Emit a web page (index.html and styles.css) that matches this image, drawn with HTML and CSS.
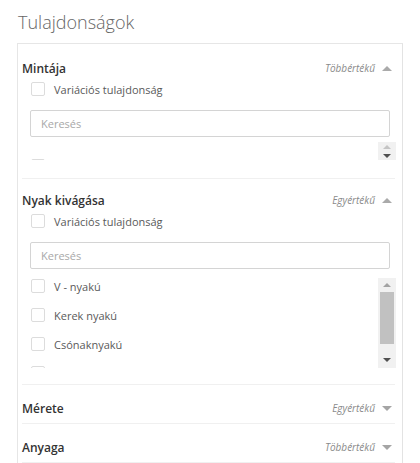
FILE: index.html
```html
<!DOCTYPE html>
<html lang="hu">
<head>
  <meta charset="UTF-8" />
  <title>Tulajdonságok</title>
  <link rel="stylesheet" href="styles.css">
</head>
<body>
  <h2 class="title">Tulajdonságok</h2>

  <div class="panel">
    <div class="prop">
      <div class="prop-head">
        <span class="prop-name">Mintája</span>
        <span class="prop-type">Többértékű</span>
        <span class="caret up"></span>
      </div>
      <label class="check-row"><span class="box"></span>Variációs tulajdonság</label>
      <input class="search" type="text" placeholder="Keresés">
      <div class="scroll-area small">
        <div class="list">
          <div class="check-row"><span class="box"></span></div>
        </div>
        <div class="scrollbar">
          <div class="sb-btn"><span class="sb-arrow up off"></span></div>
          <div class="sb-btn"><span class="sb-arrow down"></span></div>
        </div>
      </div>
    </div>

    <div class="prop">
      <div class="prop-head">
        <span class="prop-name">Nyak kivágása</span>
        <span class="prop-type">Egyértékű</span>
        <span class="caret up"></span>
      </div>
      <label class="check-row"><span class="box"></span>Variációs tulajdonság</label>
      <input class="search" type="text" placeholder="Keresés">
      <div class="scroll-area tall">
        <div class="list">
          <div class="check-row"><span class="box"></span>V - nyakú</div>
          <div class="check-row"><span class="box"></span>Kerek nyakú</div>
          <div class="check-row"><span class="box"></span>Csónaknyakú</div>
          <div class="check-row"><span class="box"></span></div>
        </div>
        <div class="scrollbar">
          <div class="sb-btn top"><span class="sb-arrow up"></span></div>
          <div class="sb-track"><div class="sb-thumb"></div></div>
          <div class="sb-btn bottom"><span class="sb-arrow down"></span></div>
        </div>
      </div>
    </div>

    <div class="prop closed">
      <div class="prop-head">
        <span class="prop-name">Mérete</span>
        <span class="prop-type">Egyértékű</span>
        <span class="caret down"></span>
      </div>
    </div>

    <div class="prop closed">
      <div class="prop-head">
        <span class="prop-name">Anyaga</span>
        <span class="prop-type">Többértékű</span>
        <span class="caret down"></span>
      </div>
    </div>
  </div>
</body>
</html>
```

FILE: styles.css
```css
body {
  margin: 0;
  padding: 0 0 0 17px;
  font-family: 'Open Sans', 'Noto Sans', sans-serif;
  background: #fff;
  color: #555;
}
.title {
  margin: 0;
  padding: 10px 0 0 1px;
  height: 43px;
  box-sizing: border-box;
  font-size: 18px;
  line-height: 24px;
  font-weight: 300;
  color: #666;
}
.panel {
  width: 386px;
  height: 440px;
  box-sizing: border-box;
  border: 1px solid #e6e6e6;
  border-right-color: #e3e3e3;
  padding: 3px 7px 0 4px;
}
.prop {
  padding: 13px 0 16px 0;
  border-bottom: 1px solid #f0f0f0;
}
.prop:first-child { padding-bottom: 18px; }
.prop.closed { padding: 15px 0 7px 0; }
.prop-head {
  display: flex;
  align-items: center;
  height: 16px;
  padding-right: 3px;
}
.prop-name {
  flex: 1;
  font-size: 12px;
  font-weight: 600;
  color: #333;
}
.prop-type {
  font-size: 10px;
  font-style: italic;
  color: #8a8a8a;
  margin-right: 7px;
}
.caret {
  width: 0;
  height: 0;
  border-left: 5px solid transparent;
  border-right: 5px solid transparent;
}
.caret.up { border-bottom: 5px solid #aaa; }
.caret.down { border-top: 5px solid #a5a5a5; }

.check-row {
  display: flex;
  align-items: center;
  height: 16px;
  margin: 5px 0 0 9px;
  font-size: 11px;
  color: #5a5a5a;
}
.box {
  width: 14px;
  height: 14px;
  box-sizing: border-box;
  border: 1px solid #dcdcdc;
  border-radius: 2px;
  margin-right: 9px;
  flex-shrink: 0;
}
.search {
  display: block;
  width: 360px;
  height: 27px;
  box-sizing: border-box;
  margin: 13px 0 0 8px;
  padding: 0 10px;
  border: 1px solid #d4d4d4;
  border-radius: 2px;
  font-family: inherit;
  font-size: 11px;
  color: #555;
  outline: none;
}
.search::placeholder { color: #a8a8a8; }

.scroll-area {
  display: flex;
  margin-left: 0;
}
.scroll-area.small { height: 18px; margin-top: 5px; }
.scroll-area.tall { height: 90px; margin-top: 9px; }
.list {
  flex: 1;
  overflow: hidden;
}
.scroll-area.small .list { padding-top: 16px; }
.scroll-area.small .check-row { margin-top: 0; }
.list .check-row { margin: 0 0 13px 9px; }

.scrollbar {
  width: 18px;
  display: flex;
  flex-direction: column;
  background: #f1f1f1;
  margin-right: -1px;
}
.sb-btn {
  flex: 1;
  display: flex;
  align-items: center;
  justify-content: center;
}
.sb-btn.top { flex: 0 0 13px; }
.sb-btn.bottom { flex: 0 0 17px; }
.sb-track {
  flex: 1;
  padding: 1px 2px 7px 2px;
  display: flex;
}
.sb-thumb {
  flex: 1;
  background: #c1c1c1;
}
.sb-arrow {
  width: 0;
  height: 0;
  border-left: 4px solid transparent;
  border-right: 4px solid transparent;
}
.sb-arrow.up { border-bottom: 4px solid #a3a3a3; }
.sb-arrow.up.off { border-bottom-color: #c4c4c4; }
.sb-arrow.down { border-top: 4px solid #505050; }
```
